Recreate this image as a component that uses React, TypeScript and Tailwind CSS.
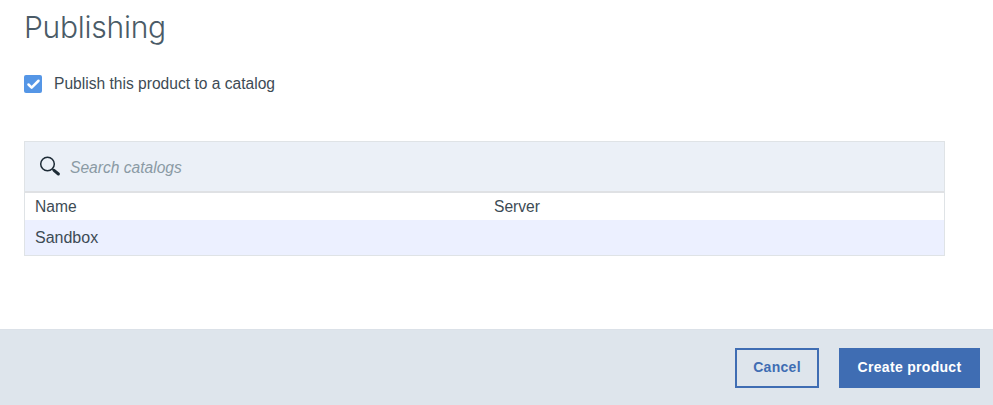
import { Check } from "lucide-react";

export default function App() {
  return (
    <div className="w-[993px] h-[405px] bg-white flex flex-col overflow-hidden font-['Liberation_Sans',sans-serif] text-[#3d4b55]">
      <div className="flex-1 px-6">
        <h1 className="h-[56px] pt-[7px] font-['Inter',sans-serif] text-[30px] leading-[40px] font-light tracking-[-0.25px] text-[#4a5b67]">Publishing</h1>
        <label className="flex items-center h-[18px] mt-[19px] gap-3">
          <span className="flex items-center justify-center w-[18px] h-[18px] rounded-[2px] bg-[#5596e6]">
            <Check size={15} strokeWidth={4} className="text-white" />
          </span>
          <span className="text-[15.6px] leading-[18px] text-[#3d4b55]">Publish this product to a catalog</span>
        </label>
        <div className="mt-[48px] w-[921px] border border-[#dfe3e6]">
          <div className="flex items-center h-[51px] gap-[9px] pl-[14px] bg-[#ebf0f7] border-b-2 border-[#dfe1e4]">
            <svg width="23" height="23" viewBox="0 0 23 23" fill="none" className="-ml-[1px]">
              <circle cx="9.5" cy="9" r="6.8" stroke="#1d2b36" strokeWidth="1.5" />
              <path d="M14.5 14l1.2 1.2" stroke="#1d2b36" strokeWidth="1.5" />
              <path d="M16 15.4l4.4 3.6" stroke="#1d2b36" strokeWidth="3" strokeLinecap="round" />
            </svg>
            <span className="pt-[2px] text-[15.6px] italic text-[#8a9aa4]">Search catalogs</span>
          </div>
          <div className="grid grid-cols-[459px_1fr] items-center h-[27px] px-[10px] bg-white text-[15.6px]">
            <span>Name</span>
            <span>Server</span>
          </div>
          <div className="flex items-center h-[35px] px-[10px] bg-[#ecf0ff] text-[16px]">Sandbox</div>
        </div>
      </div>
      <div className="flex items-center justify-end gap-5 h-[76px] pr-[13px] bg-[#dee5ec] border-t border-[#dbe1e8]">
        <button className="w-[84px] h-[40px] border-2 border-[#3f6db3] text-[#3f6db3] text-[14px] font-bold tracking-[0.3px]">Cancel</button>
        <button className="w-[141px] h-[40px] bg-[#3f6db3] text-white text-[14px] font-bold tracking-[0.3px]">Create product</button>
      </div>
    </div>
  );
}
